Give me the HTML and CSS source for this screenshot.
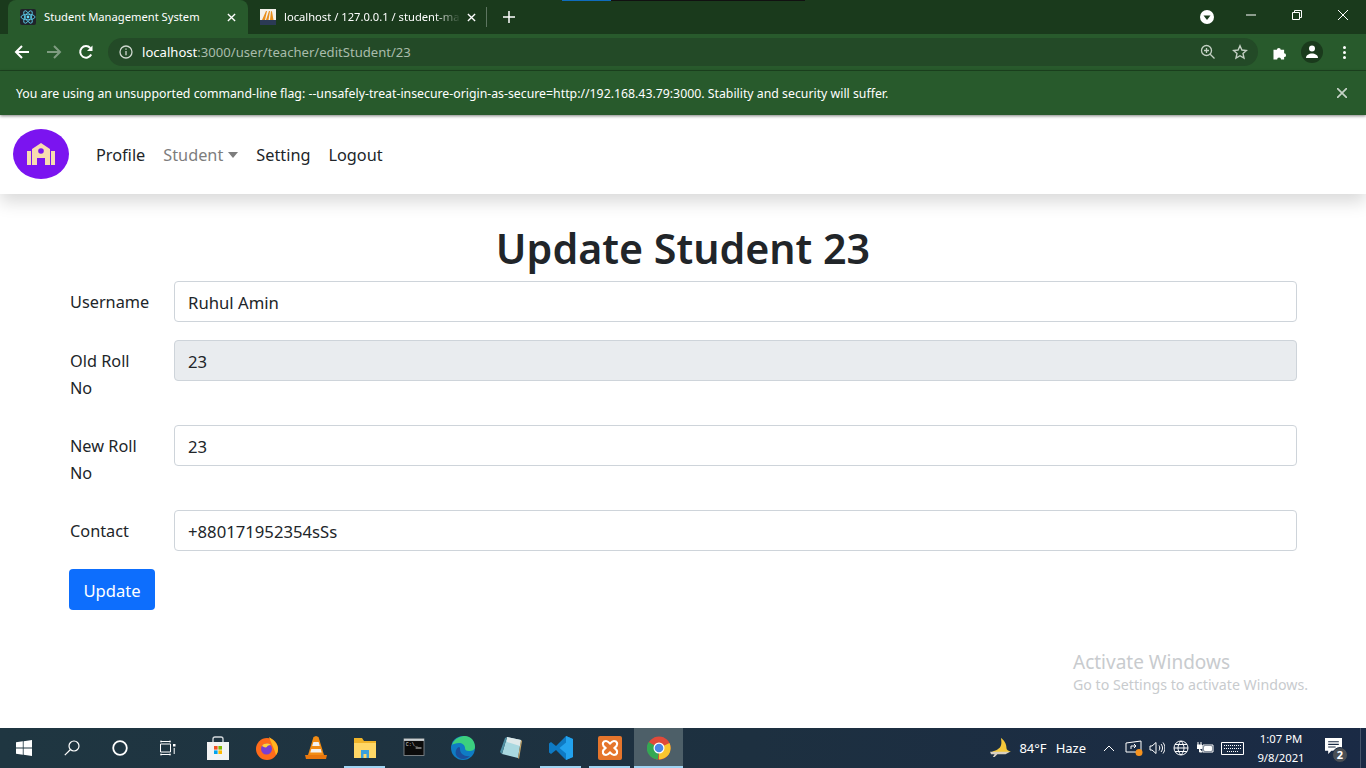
FILE: index.html
```html
<!DOCTYPE html>
<html lang="en">

<head>
    <meta charset="UTF-8">
    <meta name="viewport" content="width=device-width, initial-scale=1.0">
    <title>Student Management System</title>
    <link rel="stylesheet" href="styles.css">
</head>

<body>
    <div class="top-strip"></div>

    <div class="tabstrip">
        <div class="tab active">
            <svg class="favicon" viewBox="0 0 16 16">
                <rect width="16" height="16" rx="2" fill="#20232a" />
                <g fill="none" stroke="#61dafb" stroke-width=".8">
                    <ellipse cx="8" cy="8" rx="7" ry="2.8" />
                    <ellipse cx="8" cy="8" rx="7" ry="2.8" transform="rotate(60 8 8)" />
                    <ellipse cx="8" cy="8" rx="7" ry="2.8" transform="rotate(120 8 8)" />
                </g>
                <circle cx="8" cy="8" r="1.4" fill="#61dafb" />
            </svg>
            <span class="tab-title">Student Management System</span>
            <svg class="tab-close" viewBox="0 0 10 10"><path d="M1 1l8 8M9 1l-8 8" /></svg>
        </div>
        <div class="tab">
            <svg class="favicon" viewBox="0 0 16 16">
                <rect width="16" height="16" fill="#f4f1ea" />
                <path d="M2 11L6 2h1L5 11zM6 11l3-9h1L8.500 11zM10 11l1-9 1 .5 1.500 8.500z" fill="#e98f1b" />
                <rect y="11" width="16" height="5" fill="#2b3a55" />
            </svg>
            <span class="tab-title fade">localhost / 127.0.0.1 / student-ma</span>
            <svg class="tab-close" viewBox="0 0 10 10"><path d="M1 1l8 8M9 1l-8 8" /></svg>
        </div>
        <div class="tab-sep"></div>
        <svg class="new-tab" viewBox="0 0 12 12"><path d="M6 0v12M0 6h12" /></svg>
        <div class="strip-right">
            <svg class="tab-search" viewBox="0 0 14 14">
                <circle cx="7" cy="7" r="7" fill="#fff" />
                <path d="M3.500 5.500h7L7 10z" fill="#1a3a1c" />
            </svg>
            <div class="win-btn">
                <svg viewBox="0 0 10 10" width="10" height="10"><path d="M0 5h10" /></svg>
            </div>
            <div class="win-btn">
                <svg viewBox="0 0 10 10" width="10" height="10"><path d="M.5 2.500h7v7h-7zM2.500 2.500V.5h7v7h-2" /></svg>
            </div>
            <div class="win-btn">
                <svg viewBox="0 0 10 10" width="10" height="10"><path d="M0 0l10 10M10 0L0 10" /></svg>
            </div>
        </div>
    </div>

    <div class="toolbar">
        <svg class="tool-icon" viewBox="0 0 16 16"><path d="M15 8H2M8 2L2 8l6 6" fill="none" stroke="#fff" stroke-width="2" /></svg>
        <svg class="tool-icon" viewBox="0 0 16 16"><path d="M1 8h13M8 2l6 6-6 6" fill="none" stroke="#7f9c81" stroke-width="2" /></svg>
        <svg class="tool-icon" viewBox="0 0 16 16">
            <path d="M13.200 10.500A5.800 5.800 0 1 1 12.300 4" fill="none" stroke="#fff" stroke-width="2" />
            <path d="M14.500 1.500v5.500H9z" fill="#fff" />
        </svg>
        <div class="omnibox">
            <svg class="info-icon" viewBox="0 0 14 14">
                <circle cx="7" cy="7" r="6" fill="none" stroke="#cfd8cf" stroke-width="1.300" />
                <path d="M7 6v4.200M7 3.500v1.300" stroke="#cfd8cf" stroke-width="1.300" />
            </svg>
            <span class="url"><b>localhost</b>:3000/user/teacher/editStudent/23</span>
            <svg class="omni-icon" viewBox="0 0 16 16">
                <circle cx="6.500" cy="6.500" r="5" fill="none" stroke="#c3cfc3" stroke-width="1.300" />
                <path d="M10.200 10.200L14.500 14.500M4 6.500h5M6.500 4v5" stroke="#c3cfc3" stroke-width="1.300" fill="none" />
            </svg>
            <svg class="omni-icon" viewBox="0 0 16 16">
                <path d="M8 1.800l1.900 4.200 4.500.5-3.400 3 1 4.500L8 11.700 4 14l1-4.500-3.400-3 4.500-.5z" fill="none" stroke="#c3cfc3" stroke-width="1.400" />
            </svg>
        </div>
        <svg class="ext-icon" viewBox="1 0 14.500 15.500">
            <path d="M1 5h3.500a2 2 0 1 1 4 0H12v3.500a2 2 0 1 1 0 4V15H8.800a2 2 0 1 0-4 0H1z" fill="#fff" />
        </svg>
        <div class="avatar">
            <svg viewBox="0 0 14 14" width="14" height="14">
                <circle cx="7" cy="3.500" r="3" fill="#fff" />
                <path d="M1 13c0-3 3-4.500 6-4.500s6 1.500 6 4.500z" fill="#fff" />
            </svg>
        </div>
        <div class="kebab"><i></i><i></i><i></i></div>
    </div>

    <div class="infobar">
        <span>You are using an unsupported command-line flag: --unsafely-treat-insecure-origin-as-secure=http://192.168.43.79:3000. Stability and security will suffer.</span>
        <svg class="info-close" viewBox="0 0 10 10"><path d="M0 0l10 10M10 0L0 10" /></svg>
    </div>

    <nav class="navbar">
        <div class="brand">
            <svg viewBox="0 0 28 22" width="28" height="22">
                <path d="M0 8h4v14H0zM24 8h4v14h-4zM5 6l9-6 9 6v16h-5v-7h-8v7H5z" fill="#f7dcb0" />
                <circle cx="14" cy="8" r="2.800" fill="#7b14f0" />
            </svg>
        </div>
        <ul class="nav-list">
            <li>Profile</li>
            <li class="muted">Student<span class="caret"></span></li>
            <li>Setting</li>
            <li>Logout</li>
        </ul>
    </nav>

    <main class="page">
        <h1>Update Student 23</h1>
        <form class="edit-form">
            <div class="row">
                <label>Username</label>
                <input class="control" type="text" value="Ruhul Amin">
            </div>
            <div class="row">
                <label>Old Roll No</label>
                <input class="control" type="text" value="23" disabled>
            </div>
            <div class="row">
                <label>New Roll No</label>
                <input class="control" type="text" value="23">
            </div>
            <div class="row">
                <label>Contact</label>
                <input class="control" type="text" value="+880171952354sSs">
            </div>
            <button class="btn-update" type="button">Update</button>
        </form>
        <div class="watermark">
            <div class="wm-title">Activate Windows</div>
            <div class="wm-sub">Go to Settings to activate Windows.</div>
        </div>
    </main>

    <footer class="taskbar">
        <div class="task-item small">
            <svg viewBox="0 0 16 16" width="16" height="16">
                <path d="M0 2.300l6.800-1v6.300H0zM7.600 1.200L16 0v7.600H7.600zM0 8.400h6.800v6.300l-6.800-1zM7.600 8.400H16V16l-8.400-1.200z" fill="#fff" />
            </svg>
        </div>
        <div class="task-item small">
            <svg viewBox="0 0 16 16" width="16" height="16">
                <circle cx="10" cy="6" r="5" fill="none" stroke="#fff" stroke-width="1.200" />
                <path d="M6.500 9.500L.8 15.200" stroke="#fff" stroke-width="1.200" />
            </svg>
        </div>
        <div class="task-item small">
            <svg viewBox="0 0 16 16" width="16" height="16"><circle cx="8" cy="8" r="6.800" fill="none" stroke="#fff" stroke-width="1.800" /></svg>
        </div>
        <div class="task-item small last-small">
            <svg viewBox="0 0 16 16" width="16" height="16">
                <path d="M.5 4h10v8H.5zM.5 1.500h10M.5 14.500h10M10 .5v2M1 .5v2M1 13.500v2M10 13.500v2" fill="none" stroke="#fff" stroke-width="1" />
                <path d="M13 4h2.500v2.500H13z" fill="#fff" />
                <path d="M14.200 8v6" stroke="#fff" />
            </svg>
        </div>
        <div class="task-item">
            <svg viewBox="0 0 24 24" width="24" height="24">
                <path d="M7 7V3a2 2 0 0 1 2-2h6a2 2 0 0 1 2 2v4" fill="none" stroke="#d5dade" stroke-width="1.300" />
                <path d="M1 6h22v18H1z" fill="#f3f3f3" />
                <path d="M8 10h3.600v3.600H8z" fill="#f25022" />
                <path d="M12.400 10H16v3.600h-3.600z" fill="#7fba00" />
                <path d="M8 14.400h3.600V18H8z" fill="#00a4ef" />
                <path d="M12.400 14.400H16V18h-3.600z" fill="#ffb900" />
            </svg>
        </div>
        <div class="task-item">
            <svg viewBox="0 0 24 24" width="24" height="24">
                <circle cx="12" cy="13" r="11" fill="#ff6b1a" />
                <path d="M14 1c5 3 9 7 9 12 0 3-1 5-2 6-2-7-5-12-7-18z" fill="#ffb51f" />
                <circle cx="11.500" cy="13" r="5.500" fill="#7a3fd1" />
                <path d="M7 10c2-3 6-3 9-1-3 0-4 1-4 2-2 1-3 0-5-1z" fill="#ffd23a" />
            </svg>
        </div>
        <div class="task-item">
            <svg viewBox="0 0 24 24" width="24" height="24">
                <path d="M12 0l2.500 1 5.500 18H4L9.500 1z" fill="#f28c14" />
                <path d="M9.400 6h5.200l1.200 4H8.200zM7.300 13h9.400l1 3.500H6.300z" fill="#f2f2f2" />
                <path d="M1 19h22l-1 4H2z" fill="#e8760d" />
            </svg>
        </div>
        <div class="task-item running">
            <svg viewBox="0 0 24 24" width="24" height="24">
                <path d="M1 2h8l2 3h12v17H1z" fill="#f0b429" />
                <path d="M1 7h22v15H1z" fill="#ffd766" />
                <path d="M8 14h8v8h-2.500v-4h-3v4H8z" fill="#3aa0dc" />
            </svg>
        </div>
        <div class="task-item">
            <svg viewBox="0 0 24 24" width="24" height="20">
                <rect y="1" width="24" height="20" fill="#0b0b0b" stroke="#8a8f92" />
                <rect y="1" width="24" height="2.500" fill="#c9ced1" />
                <text x="2" y="10" class="cmd-text">C:\_</text>
                <path d="M14 12h7" stroke="#fff" />
            </svg>
        </div>
        <div class="task-item">
            <svg viewBox="0 0 24 24" width="24" height="24">
                <circle cx="12" cy="12" r="12" fill="#0f7cc4" />
                <path d="M1 9C3 2 10 0 14 0c6 0 10 5 10 11 0 3-3 4-6 4-3 0-4-1-4-3 0-3-3-5-6-5-3 0-6 1-7 2z" fill="#3bd07f" />
                <path d="M9 13c0 5 5 8 10 7-4 4-11 4-14-1-1-3 0-7 3-8 1 0 1 1 1 2z" fill="#1b4f9c" />
            </svg>
        </div>
        <div class="task-item">
            <svg viewBox="0 0 24 24" width="24" height="24">
                <path d="M7 1l14 3-3 18L2 18z" fill="#a9d8e0" />
                <path d="M7 1l14 3-1 6L7 6z" fill="#dfe9ea" />
                <path d="M18 22l3-18 1 1-3 18z" fill="#c9a86a" />
                <path d="M2 18L7 1 5 2 0 16z" fill="#4e8fa3" />
            </svg>
        </div>
        <div class="task-item running">
            <svg viewBox="0 0 24 24" width="24" height="24">
                <path d="M17 0l7 3v18l-7 3L7 14l-5 4-2-1.500V7.500L2 6l5 4z" fill="#0e7ac4" />
                <path d="M17 0l7 3v18l-7 3zM17 6.500L10.500 12l6.500 5.500z" fill="#22a2ee" />
            </svg>
        </div>
        <div class="task-item running">
            <svg viewBox="0 0 24 24" width="24" height="24">
                <rect width="24" height="24" rx="2" fill="#e5752c" />
                <path d="M8 5c-3 0-4 3-2.500 5L7.500 12l-2 2C4 16 5 19 8 19c1.500 0 2.500-1 4-2.500 1.500 1.500 2.500 2.500 4 2.500 3 0 4-3 2.500-5l-2-2 2-2C20 8 19 5 16 5c-1.500 0-2.500 1-4 2.500C10.500 6 9.500 5 8 5z" fill="none" stroke="#fff" stroke-width="2.200" />
            </svg>
        </div>
        <div class="task-item active-app running">
            <svg viewBox="0 0 24 24" width="24" height="24">
                <circle cx="12" cy="12" r="11.500" fill="#e04a3a" />
                <path d="M12 12L22.500 7A11.500 11.500 0 0 1 12 23.500z" fill="#f9c72e" />
                <path d="M12 12l-1 11.500A11.500 11.500 0 0 1 1.500 6z" fill="#34a853" />
                <circle cx="12" cy="12" r="5.500" fill="#fff" />
                <circle cx="12" cy="12" r="4.300" fill="#4a86e8" />
            </svg>
        </div>

        <div class="tray">
            <svg class="weather" viewBox="0 0 24 22" width="22" height="20">
                <path d="M12 0c3 2 6 6 6 11 0 2 2 3 5 4-6 1-17 1-21 0 4-1 9-3 10-7 1-3 0-6 0-8z" fill="#f5c83a" />
                <path d="M0 15h22l-5 3H8l-3 3H3l2-3H1z" fill="#d8cfc0" />
            </svg>
            <span class="temp">84°F</span>
            <span class="haze">Haze</span>
            <svg class="tray-icon caret-up" viewBox="0 0 12 7"><path d="M1 6l5-5 5 5" /></svg>
            <svg class="tray-icon screen" viewBox="0 0 18 18">
                <path d="M1 4l15-2v11H1z" />
                <path d="M6 10V7h5M9 5l2 2-2 2" />
                <circle cx="14" cy="13.500" r="3.500" />
            </svg>
            <svg class="tray-icon speaker" viewBox="0 0 16 16">
                <path d="M1 6v4h2l4 3.500v-11L3 6zM10 5.500c1 1.500 1 3.500 0 5M12 4c2 2.500 2 5.500 0 8M14 2.500c2.500 3.500 2.500 7.500 0 11" />
            </svg>
            <svg class="tray-icon globe" viewBox="0 0 16 16">
                <circle cx="8" cy="8" r="7" />
                <path d="M1 8h14M8 1c-4 4-4 10 0 14M8 1c4 4 4 10 0 14M2 4.500h12M2 11.500h12" />
            </svg>
            <svg class="tray-icon battery" viewBox="0 0 17 12">
                <path d="M6 3h10v7H6z" />
                <path class="fill" d="M7.500 4.500h7v4h-7zM0 3h5v3.500H0zM1 0v3M4 0v3M2.500 6.500V10h3" />
            </svg>
            <svg class="tray-icon keyboard" viewBox="0 0 23 13">
                <path d="M.5.5h22v12H.5z" />
                <path d="M3 3.500h17M3 6.500h17M6 9.500h11" stroke-dasharray="1 1" />
            </svg>
            <div class="clock">
                <div>1:07 PM</div>
                <div>9/8/2021</div>
            </div>
            <div class="notify">
                <svg viewBox="0 0 16 16" width="17" height="17">
                    <path d="M0 0h16v12H6l-3 3v-3H0z" fill="#fff" />
                    <path d="M3 3.500h10M3 6h10M3 8.500h7" stroke="#1b2b44" />
                </svg>
                <span class="notify-badge">2</span>
            </div>
        </div>
    </footer>
</body>

</html>
```

FILE: styles.css
```css
* {
    margin: 0;
    padding: 0;
    box-sizing: border-box;
}

ul {
    list-style: none;
}

html,
body {
    width: 1366px;
    height: 768px;
    overflow: hidden;
}

body {
    position: relative;
    display: flex;
    flex-direction: column;
    background: #fff;
    font-family: "Noto Sans", "Open Sans", sans-serif;
    color: #212529;
}

/* stray bit of another window above the tabs */
.top-strip {
    position: absolute;
    left: 562px;
    top: 0;
    width: 243px;
    height: 1px;
    background: linear-gradient(to right, #0f6cbd 0, #0f6cbd 49px, #111 49px);
}

/* browser chrome */
.tabstrip {
    height: 34px;
    background: #1a3a1c;
    display: flex;
    align-items: flex-end;
    padding-left: 8px;
    flex-shrink: 0;
}

.tab {
    width: 240px;
    height: 34px;
    display: flex;
    align-items: center;
    padding: 0 12px 0 12px;
    color: #fff;
    font-size: 11.200px;
    border-radius: 8px 8px 0 0;
}

.tab.active {
    background: #285a2c;
}

.favicon {
    width: 16px;
    height: 16px;
    margin-right: 8px;
    flex-shrink: 0;
}

.tab-title {
    flex: 1;
    min-width: 0;
    white-space: nowrap;
    padding-bottom: 2px;
}

.tab-title.fade {
    -webkit-mask-image: linear-gradient(to right, #000 85%, transparent 100%);
    mask-image: linear-gradient(to right, #000 85%, transparent 100%);
}

.tab-close {
    width: 9px;
    height: 9px;
    flex-shrink: 0;
    margin-left: 6px;
}

.tab-close path,
.new-tab path {
    stroke: #fff;
    stroke-width: 1.500;
    fill: none;
}

.tab-sep {
    width: 1px;
    height: 20px;
    background: #5d7560;
    margin: 0 0 7px -2px;
}

.new-tab {
    width: 12px;
    height: 12px;
    margin: 0 0 11px 16px;
}

.strip-right {
    margin-left: auto;
    display: flex;
    align-items: center;
    height: 34px;
}

.tab-search {
    width: 14px;
    height: 14px;
    margin-right: 14px;
}

.win-btn {
    width: 46px;
    height: 30px;
    margin-bottom: 4px;
    display: flex;
    align-items: center;
    justify-content: center;
}

.win-btn path {
    stroke: #fff;
    stroke-width: 1;
    fill: none;
}

.toolbar {
    height: 37px;
    background: #285a2c;
    display: flex;
    align-items: center;
    padding-left: 14px;
    border-bottom: 1px solid #1d4420;
    flex-shrink: 0;
}

.tool-icon {
    width: 16px;
    height: 16px;
    margin-right: 16px;
}

.omnibox {
    width: 1150px;
    height: 28px;
    margin-left: -2px;
    border-radius: 14px;
    background: #234a27;
    display: flex;
    align-items: center;
    padding-left: 11px;
    padding-right: 10px;
}

.info-icon {
    width: 14px;
    height: 14px;
    margin-right: 9px;
}

.url {
    flex: 1;
    font-size: 13.100px;
    color: #a9bcab;
}

.url b {
    font-weight: 400;
    color: #fff;
}

.omni-icon {
    width: 16px;
    height: 16px;
}

.omni-icon + .omni-icon {
    margin-left: 16px;
}

.ext-icon {
    width: 15px;
    height: 15px;
    margin-left: 15px;
}

.avatar {
    width: 22px;
    height: 22px;
    margin-left: 13px;
    border-radius: 50%;
    background: #1a3a1c;
    display: flex;
    align-items: center;
    justify-content: center;
}

.kebab {
    margin-left: 20px;
    display: flex;
    flex-direction: column;
    gap: 2px;
}

.kebab i {
    width: 3px;
    height: 3px;
    border-radius: 50%;
    background: #fff;
}

.infobar {
    height: 44px;
    background: #285a2c;
    color: #fff;
    font-size: 12.300px;
    display: flex;
    align-items: center;
    justify-content: space-between;
    padding: 0 19px 0 16px;
    flex-shrink: 0;
    position: relative;
    z-index: 2;
    box-shadow: 0 1px 3px rgba(0, 0, 0, 0.5);
}

.info-close {
    width: 10px;
    height: 10px;
}

.info-close path {
    stroke: #c6d2c7;
    stroke-width: 1.700;
}

/* site navbar */
.navbar {
    height: 79px;
    display: flex;
    align-items: center;
    padding-left: 13px;
    box-shadow: 0 8px 16px rgba(0, 0, 0, 0.15);
    flex-shrink: 0;
    position: relative;
    z-index: 1;
}

.brand {
    width: 56px;
    height: 50px;
    margin-bottom: 2px;
    border-radius: 50%;
    background: #7b14f0;
    display: flex;
    align-items: center;
    justify-content: center;
}

.nav-list {
    display: flex;
    gap: 18px;
    margin-left: 27px;
    font-size: 16.300px;
}

.nav-list .muted {
    color: #7d7d7d;
}

.caret {
    display: inline-block;
    margin-left: 5px;
    vertical-align: 3px;
    border-top: 6px solid #7d7d7d;
    border-left: 5px solid transparent;
    border-right: 5px solid transparent;
}

/* page content */
.page {
    flex: 1;
    position: relative;
    padding: 28px 69px 0;
}

.page h1 {
    font-size: 41.200px;
    font-weight: 600;
    line-height: 53px;
    text-align: center;
    margin-bottom: 6px;
}

.edit-form {
    width: 1228px;
}

.row {
    display: flex;
    margin-bottom: 18px;
}

.row label {
    width: 105px;
    padding: 8px 25px 6px 1px;
    font-size: 16.300px;
    line-height: 26.500px;
    flex-shrink: 0;
}

.control {
    flex: 1;
    height: 41px;
    padding: 2px 13px 0;
    border: 1px solid #ced4da;
    border-radius: 4px;
    font-family: inherit;
    font-size: 16.700px;
    color: #212529;
    background: #fff;
}

.control:disabled {
    background: #e9ecef;
    opacity: 1;
}

.btn-update {
    display: block;
    width: 86px;
    height: 41px;
    padding-top: 1px;
    border: 0;
    border-radius: 4px;
    background: #0d6efd;
    color: #fff;
    font-family: inherit;
    font-size: 16.600px;
}

.watermark {
    position: absolute;
    left: 1073px;
    top: 455px;
    color: #c8cbce;
}

.wm-title {
    font-size: 19px;
    line-height: 26px;
}

.wm-sub {
    font-size: 14.200px;
    line-height: 20px;
}

/* windows taskbar */
.taskbar {
    height: 40px;
    background: linear-gradient(to right, #1f3641 0, #1d3040 55%, #1a2a45 100%);
    display: flex;
    align-items: stretch;
    flex-shrink: 0;
}

.task-item {
    position: relative;
    width: 49px;
    display: flex;
    align-items: center;
    justify-content: center;
    flex-shrink: 0;
}

.task-item.small {
    width: 48px;
}

.task-item.last-small {
    margin-right: 1px;
}

.task-item.running::after {
    content: "";
    position: absolute;
    left: 4px;
    right: 4px;
    bottom: 0;
    height: 2px;
    background: #9fd4f3;
}

.task-item.active-app {
    background: #4d5f68;
}

.task-item.active-app::after {
    left: 0;
    right: 0;
}

.cmd-text {
    font-family: "Liberation Mono", monospace;
    font-size: 6px;
    fill: #ddd;
}

.tray {
    flex: 1;
    display: flex;
    align-items: center;
    justify-content: flex-end;
    color: #fff;
    font-size: 13px;
    font-family: "Noto Sans", sans-serif;
    box-shadow: inset -5px 0 0 #1a2a45, inset -6px 0 0 #46546a;
}

.temp {
    margin-left: 7px;
}

.haze {
    margin-left: 9px;
}

.tray-icon {
    fill: none;
    stroke: #fff;
    stroke-width: 1;
    margin-left: 8px;
}

.caret-up {
    width: 12px;
    height: 7px;
    margin-left: 17px;
}

.screen {
    width: 18px;
    height: 18px;
    margin-left: 10px;
}

.screen circle {
    fill: #f7931e;
    stroke: none;
}

.speaker {
    width: 16px;
    height: 16px;
    margin-left: 6px;
}

.globe {
    width: 16px;
    height: 16px;
}

.battery {
    width: 17px;
    height: 12px;
}

.battery .fill {
    fill: #fff;
}

.keyboard {
    width: 23px;
    height: 13px;
    margin-left: 7px;
}

.clock {
    width: 62px;
    margin-left: 6px;
    text-align: center;
    font-size: 11.300px;
    line-height: 19px;
}

.notify {
    position: relative;
    align-self: stretch;
    width: 40px;
    margin-left: 1px;
    margin-right: 13px;
    display: flex;
    align-items: center;
    padding-left: 12px;
    padding-bottom: 3px;
}

.notify-badge {
    position: absolute;
    left: 19px;
    top: 19px;
    width: 16px;
    height: 16px;
    border-radius: 50%;
    background: #4a4f55;
    border: 1px solid #1b2b44;
    text-align: center;
    font-size: 11px;
    line-height: 14px;
    font-weight: 700;
}
```
